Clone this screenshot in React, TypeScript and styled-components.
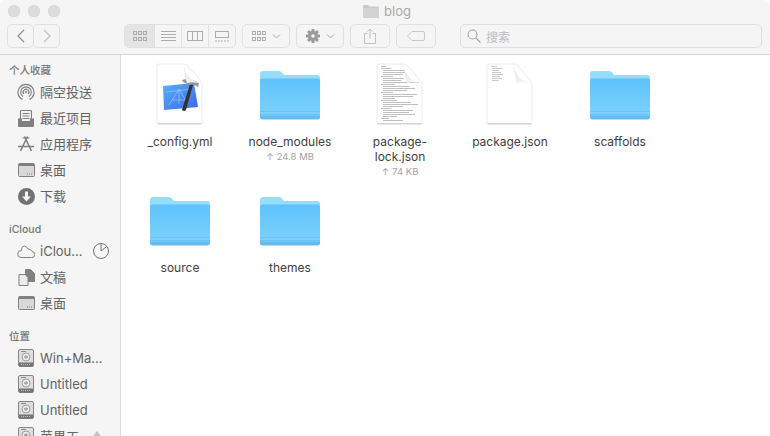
import React from "react";
import styled, { createGlobalStyle } from "styled-components";

const GlobalStyle = createGlobalStyle`
  html, body {
    margin: 0;
    padding: 0;
    background: #ffffff;
    overflow: hidden;
  }
`;

const FONT = `Inter, "Noto Sans CJK SC", sans-serif`;

const Window = styled.div`
  width: 770px;
  height: 436px;
  display: flex;
  flex-direction: column;
  overflow: hidden;
  font-family: ${FONT};
  border-radius: 6px 6px 0 0;
`;

// title bar + toolbar
const TitleBar = styled.div`
  height: 54px;
  flex: none;
  background: #f5f5f5;
  border-bottom: 1px solid #d6d6d6;
  display: flex;
  flex-direction: column;
`;
const TitleRow = styled.div`
  height: 24px;
  padding: 0 4px 2px 8px;
  display: grid;
  grid-template-columns: 1fr auto 1fr;
  align-items: center;
  box-sizing: border-box;
`;
const Lights = styled.div`
  display: flex;
  gap: 8px;
`;
const Light = styled.div`
  width: 12px;
  height: 12px;
  border-radius: 50%;
  background: #dcdcdc;
  box-shadow: inset 0 0 0 0.5px #d2d2d2;
`;
const Title = styled.div`
  display: flex;
  align-items: center;
  gap: 5px;
  font-size: 13px;
  color: #a9a9a9;
`;
const Toolbar = styled.div`
  height: 24px;
  padding-left: 7px;
  display: flex;
`;
const ToolButton = styled.div<{ $w: number; $ml?: number }>`
  width: ${(p) => p.$w}px;
  margin-left: ${(p) => p.$ml ?? 0}px;
  height: 24px;
  box-sizing: border-box;
  border: 1px solid #e0e0e0;
  border-radius: 5px;
  display: flex;
  align-items: center;
  justify-content: center;
  gap: 6px;
  background: #f5f5f5;
`;
const ViewGroup = styled.div`
  width: 112px;
  margin-left: 64px;
  height: 24px;
  box-sizing: border-box;
  border: 1px solid #e0e0e0;
  border-radius: 5px;
  display: grid;
  grid-template-columns: 29px 27px 27px 1fr;
  overflow: hidden;
`;
const ViewCell = styled.div<{ $active?: boolean; $first?: boolean }>`
  display: flex;
  align-items: center;
  justify-content: center;
  background: ${(p) => (p.$active ? "#e4e4e4" : "transparent")};
  border-left: ${(p) => (p.$first ? "none" : "1px solid #e0e0e0")};
`;
const SearchBox = styled.div`
  width: 302px;
  margin-left: 24px;
  height: 24px;
  box-sizing: border-box;
  border: 1px solid #e0e0e0;
  border-radius: 5px;
  display: flex;
  align-items: center;
  padding-left: 6px;
  gap: 5px;
  font-size: 12px;
  color: #bdbdbd;
`;

// sidebar
const Body = styled.div`
  flex: 1;
  display: flex;
  min-height: 0;
`;
const Sidebar = styled.div`
  width: 121px;
  flex: none;
  box-sizing: border-box;
  background: #f5f5f5;
  border-right: 1px solid #dcdcdc;
  padding-top: 5px;
  overflow: hidden;
`;
const SectionHead = styled.div<{ $first?: boolean }>`
  height: 19px;
  line-height: 21px;
  margin-top: ${(p) => (p.$first ? 0 : 10)}px;
  padding-left: 9px;
  font-size: 10.5px;
  font-weight: 500;
  color: #757575;
`;
const SideItem = styled.div`
  height: 26px;
  display: flex;
  align-items: center;
  position: relative;
  padding-left: 17px;
  font-size: 13px;
  color: #626262;
  white-space: nowrap;
`;
const SideIcon = styled.div`
  width: 18px;
  height: 18px;
  margin-right: 5px;
  display: flex;
  align-items: center;
  justify-content: center;
  flex: none;
`;
const SideLabel = styled.span<{ $cjk: boolean }>`
  padding-bottom: ${(p) => (p.$cjk ? 2 : 0)}px;
`;
const SideTrail = styled.div`
  position: absolute;
  left: 92px;
  top: 4px;
  width: 18px;
  height: 18px;
`;

// file grid
const Files = styled.div`
  flex: 1;
  background: #ffffff;
  padding: 7px 0 0 4px;
  display: grid;
  grid-template-columns: repeat(5, 110px);
  grid-auto-rows: 126px;
  align-content: start;
`;
const FileCell = styled.div`
  display: flex;
  flex-direction: column;
  align-items: center;
`;
const FileIcon = styled.div`
  width: 64px;
  height: 64px;
  margin-bottom: 8px;
`;
const FileName = styled.div`
  width: 84px;
  font-size: 12px;
  line-height: 15px;
  text-align: center;
  color: #404040;
`;
const FileMeta = styled.div`
  font-size: 9.5px;
  line-height: 15px;
  color: #a2a2a2;
  text-align: center;
`;

const FolderIcon = () => (
  <svg width="64" height="64" viewBox="0 0 64 64">
    <defs>
      <linearGradient id="folderBody" x1="0" y1="0" x2="0" y2="1">
        <stop offset="0" stopColor="#5ec3fb" />
        <stop offset="1" stopColor="#80d2ff" />
      </linearGradient>
    </defs>
    <path d="M2 12q0-3 3-3h16q2 0 3 1.500l2 2.500h33q3 0 3 3v38q0 3-3 3H5q-3 0-3-3z" fill="#96dcff" />
    <rect x="2" y="16.500" width="60" height="40.500" rx="2.500" fill="url(#folderBody)" />
    <rect x="2" y="49" width="60" height="1" fill="#6cc4f6" />
    <rect x="2" y="52" width="60" height="1" fill="#6cc4f6" />
    <path d="M2 54.500q0 3 3 3h54q3 0 3-3v-1H2z" fill="#62bcf0" />
  </svg>
);

const DocBase = ({ children }: { children?: React.ReactNode }) => (
  <svg width="64" height="64" viewBox="0 0 64 64">
    <defs>
      <linearGradient id="docFold" x1="0" y1="0" x2="1" y2="1">
        <stop offset="0" stopColor="#e2e2e2" />
        <stop offset="1" stopColor="#fbfbfb" />
      </linearGradient>
    </defs>
    <path d="M11 2h24q3 0 5 2l11 13q3 3 3 6v37q0 2-2 2H11q-2 0-2-2V4q0-2 2-2z" fill="#ffffff" stroke="#e4e4e4" strokeWidth="0.7" />
    <path d="M9.500 61.800h44" stroke="#c6c6c6" strokeWidth="1" />
    {children}
    <path d="M36 2q0 15 18 20q-9-3-15 -1q-3-8-3-19z" fill="url(#docFold)" />
  </svg>
);

const lockLines = [
  [13, 5], [13, 10], [15, 22], [15, 22], [15, 20], [13, 12], [15, 21], [15, 18], [15, 36], [13, 14],
  [15, 26], [15, 32], [15, 24], [13, 12], [15, 34], [15, 30], [15, 12], [13, 16], [15, 28], [15, 35],
  [15, 20], [13, 10], [15, 30], [15, 26], [15, 32], [15, 14], [13, 8], [15, 20],
];

const LockDoc = () => (
  <DocBase>
    {lockLines.map(([x, w], i) => (
      <rect key={i} x={x} y={4 + i * 2} width={w} height="0.8" fill="#b0b0b0" />
    ))}
  </DocBase>
);

const JsonDoc = () => (
  <DocBase>
    {[[13, 6], [14, 10], [14, 7], [14, 9], [14, 11], [14, 8], [14, 10], [14, 7]].map(([x, w], i) => (
      <rect key={i} x={x} y={4 + i * 2} width={w} height="0.8" fill="#bcbcbc" />
    ))}
  </DocBase>
);

const XcodeDoc = () => (
  <DocBase>
    <defs>
      <linearGradient id="blueprint" x1="0" y1="0" x2="1" y2="1">
        <stop offset="0" stopColor="#55b4fb" />
        <stop offset="1" stopColor="#3f63e6" />
      </linearGradient>
    </defs>
    <path d="M15 24L46 21L50 45L16 48z" fill="url(#blueprint)" />
    <path d="M21 43l10-16 9 15M24 38h14M31 27v15M18 30l26-3" stroke="#a6cdfa" strokeWidth="0.6" fill="none" />
    <path d="M42 22l3 1-7 25q-2 2-4 0z" fill="#333333" />
    <path d="M34 18q6-2 11 0l6 3-1 4-5-3-3 1-7-3z" fill="#979797" />
  </DocBase>
);

const GridIcon = () => (
  <svg width="14" height="10" viewBox="0 0 14 10" fill="none" stroke="#ababab" strokeWidth="1">
    {[0.5, 5.5, 10.5].map((x) =>
      [0.5, 6.5].map((y) => <rect key={`${x}-${y}`} x={x} y={y} width="3" height="3" />)
    )}
  </svg>
);
const ListIcon = () => (
  <svg width="15" height="11" viewBox="0 0 15 11" stroke="#adadad" strokeWidth="1">
    {[0.5, 3.5, 6.5, 9.5].map((y) => <line key={y} x1="0" x2="15" y1={y} y2={y} />)}
  </svg>
);
const ColumnsIcon = () => (
  <svg width="16" height="10" viewBox="0 0 16 10" fill="none" stroke="#adadad" strokeWidth="1">
    <rect x="0.500" y="0.500" width="15" height="9" />
    <path d="M5.500 0v10M10.500 0v10" />
  </svg>
);
const GalleryIcon = () => (
  <svg width="14" height="11" viewBox="0 0 14 11" fill="none" stroke="#adadad" strokeWidth="1">
    <rect x="0.500" y="0.500" width="13" height="6" />
    <path d="M0 10h2M3 10h2M6 10h2M9 10h2M12 10h2" />
  </svg>
);
const Chevron = () => (
  <svg width="9" height="5" viewBox="0 0 9 5" fill="none" stroke="#a8a8a8" strokeWidth="1">
    <path d="M1 0.500l3.500 3.500 3.500-3.500" />
  </svg>
);
const NavArrow = ({ left, c }: { left?: boolean; c: string }) => (
  <svg width="8" height="14" viewBox="0 0 8 14" fill="none" stroke={c} strokeWidth="1.200">
    <path d={left ? "M7 1L1 7l6 6" : "M1 1l6 6-6 6"} />
  </svg>
);
const GearIcon = () => (
  <svg width="14" height="14" viewBox="0 0 14 14">
    <g fill="#9a9a9a">
      {[0, 45, 90, 135].map((r) => (
        <rect key={r} x="5.500" y="0" width="3" height="14" rx="0.500" transform={`rotate(${r} 7 7)`} />
      ))}
      <circle cx="7" cy="7" r="5" />
    </g>
    <circle cx="7" cy="7" r="1.800" fill="#f5f5f5" />
  </svg>
);
const ShareIcon = () => (
  <svg width="12" height="16" viewBox="0 0 12 16" fill="none" stroke="#c0c0c0" strokeWidth="1">
    <path d="M3.500 5.500H.5v10h11v-10h-3M6 10.500V1M3.500 3.500L6 1l2.500 2.500" />
  </svg>
);
const TagIcon = () => (
  <svg width="18" height="10" viewBox="0 0 18 10" fill="none" stroke="#c8c8c8" strokeWidth="1">
    <path d="M5 .5h11q1.500 0 1.500 1.500v6q0 1.500-1.500 1.500H5L.5 5z" />
  </svg>
);
const SearchIcon = () => (
  <svg width="14" height="14" viewBox="0 0 14 14" fill="none" stroke="#a2a2a2" strokeWidth="1.100">
    <circle cx="5.500" cy="5.500" r="4.500" />
    <path d="M9 9l4.500 4.500" />
  </svg>
);
const SmallFolder = () => (
  <svg width="16" height="13" viewBox="0 0 16 13">
    <path d="M0 1q0-1 1-1h4l1.500 1.500H15q1 0 1 1V12q0 1-1 1H1q-1 0-1-1z" fill="#c9c9c9" />
    <rect x="0" y="2.500" width="16" height="10.500" rx="1" fill="#d2d2d2" />
  </svg>
);

const SIDE = "#808080";
const AirdropIcon = () => (
  <svg width="18" height="18" viewBox="0 0 18 18" fill="none" stroke={SIDE} strokeWidth="1.200">
    <path d="M5.500 16.500A8 8 0 1 1 12.500 16.500" />
    <path d="M6 13.500A5.300 5.300 0 1 1 12 13.500" />
    <path d="M7 11A2.800 2.800 0 1 1 11 11" />
    <circle cx="9" cy="9" r="1" fill={SIDE} stroke="none" />
  </svg>
);
const RecentsIcon = () => (
  <svg width="16" height="17" viewBox="0 0 16 17" fill="none" stroke={SIDE} strokeWidth="1.100">
    <rect x="2.500" y="0.500" width="11" height="11" rx="1" />
    <path d="M4.500 3.500h7M4.500 6h7M4.500 8.500h7" />
    <path d="M0.500 9v6.500q0 1 1 1h13q1 0 1-1V9h-3v3h-9V9z" fill={SIDE} />
  </svg>
);
const AppsIcon = () => (
  <svg width="18" height="16" viewBox="0 0 18 16" fill="none" stroke={SIDE} strokeWidth="1.600">
    <path d="M10.500 0.500L3.500 15M7.500 0.500L14.500 15M1 10.500h16" />
    <path d="M5.500 2h7" strokeWidth="1" />
  </svg>
);
const DesktopIcon = () => (
  <svg width="17" height="14" viewBox="0 0 17 14">
    <rect x="0.500" y="0.500" width="16" height="13" rx="1" fill="#d8d8d8" stroke={SIDE} />
    <rect x="1" y="1" width="15" height="2" fill={SIDE} />
    <path d="M9 11h1M11 11h1M13 11h1" stroke={SIDE} strokeWidth="1.200" />
  </svg>
);
const DownloadIcon = () => (
  <svg width="17" height="17" viewBox="0 0 17 17">
    <circle cx="8.500" cy="8.500" r="8.500" fill="#727272" />
    <path d="M7 3.500h3v5h3l-4.500 5-4.500-5h3z" fill="#f5f5f5" />
  </svg>
);
const CloudIcon = () => (
  <svg width="18" height="13" viewBox="0 0 18 13" fill="none" stroke={SIDE} strokeWidth="1">
    <path d="M4 12.500h10.500a3 3 0 0 0 .5-6 4 4 0 0 0-4-2.500A5 5 0 0 0 7.500 1 4 4 0 0 0 4.500 5.500 3.500 3.500 0 0 0 4 12.500z" />
  </svg>
);
const ProgressIcon = () => (
  <svg width="18" height="18" viewBox="0 0 18 18" fill="none" stroke="#757575" strokeWidth="1">
    <circle cx="9" cy="9" r="7.500" />
    <path d="M9 1.500V9l5-4" />
  </svg>
);
const DocsIcon = () => (
  <svg width="17" height="17" viewBox="0 0 17 17" fill="#ececec" stroke={SIDE} strokeWidth="1">
    <path d="M7.500 .5h5l4 4v8h-9z" fill="#808080" />
    <path d="M1 5.500h6l3 3v8H1z" />
  </svg>
);
const DiskIcon = () => (
  <svg width="16" height="18" viewBox="0 0 16 18">
    <rect x="0.500" y="0.500" width="15" height="17" rx="1.500" fill="#dedede" stroke="#858585" />
    <path d="M3 2.500h5" stroke="#8a8a8a" strokeWidth="1" />
    <rect x="1" y="13.500" width="14" height="4" fill="#757575" />
    <path d="M3 15.500h10" stroke="#c0c0c0" strokeWidth="1" strokeDasharray="1 1" />
    <circle cx="8" cy="8" r="4" fill="#ececec" stroke="#a0a0a0" />
    <ellipse cx="8" cy="8" rx="1.500" ry="1" fill="none" stroke="#8a8a8a" />
  </svg>
);
const EjectIcon = () => (
  <svg width="10" height="10" viewBox="0 0 10 10">
    <path d="M5 1l4.500 6H.5z" fill="#c2c2c2" />
  </svg>
);

type Entry = { label: string; icon: React.ReactNode; trail?: React.ReactNode; cjk?: boolean };

const sections: { head: string; items: Entry[] }[] = [
  {
    head: "个人收藏",
    items: [
      { label: "隔空投送", icon: <AirdropIcon />, cjk: true },
      { label: "最近项目", icon: <RecentsIcon />, cjk: true },
      { label: "应用程序", icon: <AppsIcon />, cjk: true },
      { label: "桌面", icon: <DesktopIcon />, cjk: true },
      { label: "下载", icon: <DownloadIcon />, cjk: true },
    ],
  },
  {
    head: "iCloud",
    items: [
      { label: "iClou...", icon: <CloudIcon />, trail: <ProgressIcon /> },
      { label: "文稿", icon: <DocsIcon />, cjk: true },
      { label: "桌面", icon: <DesktopIcon />, cjk: true },
    ],
  },
  {
    head: "位置",
    items: [
      { label: "Win+Ma...", icon: <DiskIcon /> },
      { label: "Untitled", icon: <DiskIcon /> },
      { label: "Untitled", icon: <DiskIcon /> },
      { label: "苹果工", icon: <DiskIcon />, trail: <EjectIcon />, cjk: true },
    ],
  },
];

const files: { name: string; meta?: string; icon: React.ReactNode }[] = [
  { name: "_config.yml", icon: <XcodeDoc /> },
  { name: "node_modules", meta: "↑ 24.8 MB", icon: <FolderIcon /> },
  { name: "package-lock.json", meta: "↑ 74 KB", icon: <LockDoc /> },
  { name: "package.json", icon: <JsonDoc /> },
  { name: "scaffolds", icon: <FolderIcon /> },
  { name: "source", icon: <FolderIcon /> },
  { name: "themes", icon: <FolderIcon /> },
];

const App = () => (
  <Window>
    <GlobalStyle />
    <TitleBar>
      <TitleRow>
        <Lights>
          <Light />
          <Light />
          <Light />
        </Lights>
        <Title>
          <SmallFolder />
          blog
        </Title>
      </TitleRow>
      <Toolbar>
        <ToolButton $w={27}>
          <NavArrow left c="#8e8e8e" />
        </ToolButton>
        <ToolButton $w={27} $ml={-1}>
          <NavArrow c="#c0c0c0" />
        </ToolButton>
        <ViewGroup>
          <ViewCell $active $first>
            <GridIcon />
          </ViewCell>
          <ViewCell>
            <ListIcon />
          </ViewCell>
          <ViewCell>
            <ColumnsIcon />
          </ViewCell>
          <ViewCell>
            <GalleryIcon />
          </ViewCell>
        </ViewGroup>
        <ToolButton $w={48} $ml={6}>
          <GridIcon />
          <Chevron />
        </ToolButton>
        <ToolButton $w={48} $ml={6}>
          <GearIcon />
          <Chevron />
        </ToolButton>
        <ToolButton $w={40} $ml={6}>
          <ShareIcon />
        </ToolButton>
        <ToolButton $w={40} $ml={6}>
          <TagIcon />
        </ToolButton>
        <SearchBox>
          <SearchIcon />
          搜索
        </SearchBox>
      </Toolbar>
    </TitleBar>
    <Body>
      <Sidebar>
        {sections.map((section, i) => (
          <div key={section.head}>
            <SectionHead $first={i === 0}>{section.head}</SectionHead>
            {section.items.map((item, j) => (
              <SideItem key={j}>
                <SideIcon>{item.icon}</SideIcon>
                <SideLabel $cjk={!!item.cjk}>{item.label}</SideLabel>
                {item.trail && <SideTrail>{item.trail}</SideTrail>}
              </SideItem>
            ))}
          </div>
        ))}
      </Sidebar>
      <Files>
        {files.map((file) => (
          <FileCell key={file.name}>
            <FileIcon>{file.icon}</FileIcon>
            <FileName>{file.name}</FileName>
            {file.meta && <FileMeta>{file.meta}</FileMeta>}
          </FileCell>
        ))}
      </Files>
    </Body>
  </Window>
);

export default App;
